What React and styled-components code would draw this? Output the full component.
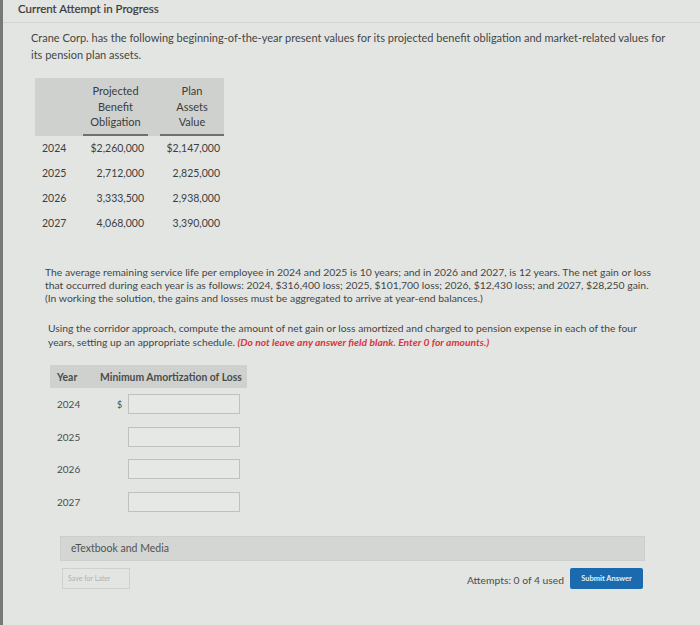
import React from "react";
import styled, { createGlobalStyle } from "styled-components";

const GlobalStyle = createGlobalStyle`
  html, body {
    margin: 0;
    padding: 0;
    background: #e3e5e3;
  }
  body {
    font-family: Lato, "Open Sans", "Liberation Sans", sans-serif;
    color: #3b3d3c;
  }
`;

const Screen = styled.div`
  width: 700px;
  height: 625px;
  box-sizing: border-box;
  border-left: 3px solid #777977;
  background: #e3e5e3;
  overflow: hidden;
`;

const TopBar = styled.div`
  height: 23px;
  box-sizing: border-box;
  padding: 2px 0 0 15px;
  font-size: 11.5px;
  font-weight: 400;
  -webkit-text-stroke: 0.2px #383a39;
  color: #383a39;
  border-bottom: 1px solid #d2d4d2;
`;

const Content = styled.div`
  padding: 4px 0 0 28px;
`;

const Para = styled.p`
  margin: ${(p) => p.top || 0}px 0 0 ${(p) => p.indent || 0}px;
  font-size: ${(p) => p.size || 10}px;
  line-height: ${(p) => p.lh || 17}px;
  white-space: nowrap;
  color: #444645;
`;

const Warn = styled.em`
  color: #d9363e;
  font-weight: 700;
  font-style: italic;
`;

const ValueTable = styled.div`
  margin: 15px 0 0 4px;
  display: grid;
  grid-template-columns: 48px 65px 12px 64px;
  width: 190px;
  font-size: 10.5px;
`;

const HeadCell = styled.div`
  background: #cfd1cf;
  height: 58px;
  box-sizing: border-box;
  padding-top: 5px;
  text-align: center;
  font-size: 11px;
  line-height: 15.5px;
  color: #3a3c3b;
  border-bottom: ${(p) => (p.rule ? "2px solid #6f716f" : "2px solid #cfd1cf")};
`;

const Cell = styled.div`
  height: 25px;
  line-height: 25px;
  text-align: ${(p) => (p.left ? "left" : "right")};
  padding: ${(p) => (p.left ? "0 0 0 7px" : "0 4px 0 0")};
  color: #3d3f3e;
`;

const AmortTable = styled.div`
  margin: 16px 0 0 19px;
  width: 197px;
`;

const AmortHead = styled.div`
  display: flex;
  align-items: center;
  height: 23px;
  background: #cfd1cf;
  font-size: 10.4px;
  font-weight: 700;
  color: #4a4c4b;
`;

const HeadYear = styled.span`
  width: 43px;
  padding-left: 7px;
`;

const AmortRow = styled.div`
  display: flex;
  align-items: center;
  height: 32.5px;
  font-size: 10px;
  color: #4a4c4b;
`;

const RowYear = styled.span`
  width: 60px;
  padding-left: 7px;
`;

const Dollar = styled.span`
  width: 11px;
  font-size: 9px;
`;

const AnswerBox = styled.div`
  width: 110px;
  height: 18px;
  border: 1px solid #bfc1bf;
  background: #e6e8e6;
`;

const MediaBar = styled.div`
  margin: 18px 0 0 29px;
  width: 585px;
  height: 25px;
  box-sizing: border-box;
  background: #d4d6d4;
  border: 1px solid #cdcfcd;
  padding-left: 10px;
  font-size: 10.5px;
  line-height: 23px;
  color: #505251;
`;

const Footer = styled.div`
  display: flex;
  align-items: center;
  margin: 7px 0 0 31px;
  width: 581px;
`;

const SaveButton = styled.div`
  width: 68px;
  height: 21px;
  box-sizing: border-box;
  border: 1px solid #cfd1cf;
  font-size: 7px;
  line-height: 19px;
  padding-left: 5px;
  color: #b0b2b0;
`;

const Attempts = styled.span`
  margin-left: auto;
  font-size: 10.3px;
  color: #4a4c4b;
  padding-top: 2px;
`;

const SubmitButton = styled.div`
  margin-left: 6px;
  width: 73px;
  height: 21px;
  background: #1c6aae;
  border-radius: 2px;
  color: #e8eef5;
  font-size: 7.5px;
  font-weight: 700;
  text-align: center;
  line-height: 21px;
`;

const values = [
  ["2024", "$2,260,000", "$2,147,000"],
  ["2025", "2,712,000", "2,825,000"],
  ["2026", "3,333,500", "2,938,000"],
  ["2027", "4,068,000", "3,390,000"],
];

export default function App() {
  return (
    <>
      <GlobalStyle />
      <Screen>
        <TopBar>Current Attempt in Progress</TopBar>
        <Content>
          <Para top={2} size={11}>
            Crane Corp. has the following beginning-of-the-year present values for its projected benefit obligation and market-related values for
            <br />
            its pension plan assets.
          </Para>

          <ValueTable>
            <HeadCell />
            <HeadCell rule>
              Projected
              <br />
              Benefit
              <br />
              Obligation
            </HeadCell>
            <HeadCell />
            <HeadCell rule>
              Plan
              <br />
              Assets
              <br />
              Value
            </HeadCell>
            {values.map(([y, pbo, assets]) => (
              <React.Fragment key={y}>
                <Cell left>{y}</Cell>
                <Cell>{pbo}</Cell>
                <Cell />
                <Cell>{assets}</Cell>
              </React.Fragment>
            ))}
          </ValueTable>

          <Para top={30} indent={14} size={10.4} lh={13}>
            The average remaining service life per employee in 2024 and 2025 is 10 years; and in 2026 and 2027, is 12 years. The net gain or loss
            <br />
            that occurred during each year is as follows: 2024, $316,400 loss; 2025, $101,700 loss; 2026, $12,430 loss; and 2027, $28,250 gain.
            <br />
            (In working the solution, the gains and losses must be aggregated to arrive at year-end balances.)
          </Para>

          <Para top={16} indent={17} size={10.3} lh={14}>
            Using the corridor approach, compute the amount of net gain or loss amortized and charged to pension expense in each of the four
            <br />
            years, setting up an appropriate schedule. <Warn>(Do not leave any answer field blank. Enter 0 for amounts.)</Warn>
          </Para>

          <AmortTable>
            <AmortHead>
              <HeadYear>Year</HeadYear>
              <span>Minimum Amortization of Loss</span>
            </AmortHead>
            {["2024", "2025", "2026", "2027"].map((y, i) => (
              <AmortRow key={y}>
                <RowYear>{y}</RowYear>
                <Dollar>{i === 0 ? "$" : ""}</Dollar>
                <AnswerBox />
              </AmortRow>
            ))}
          </AmortTable>

          <MediaBar>eTextbook and Media</MediaBar>

          <Footer>
            <SaveButton>Save for Later</SaveButton>
            <Attempts>Attempts: 0 of 4 used</Attempts>
            <SubmitButton>Submit Answer</SubmitButton>
          </Footer>
        </Content>
      </Screen>
    </>
  );
}
